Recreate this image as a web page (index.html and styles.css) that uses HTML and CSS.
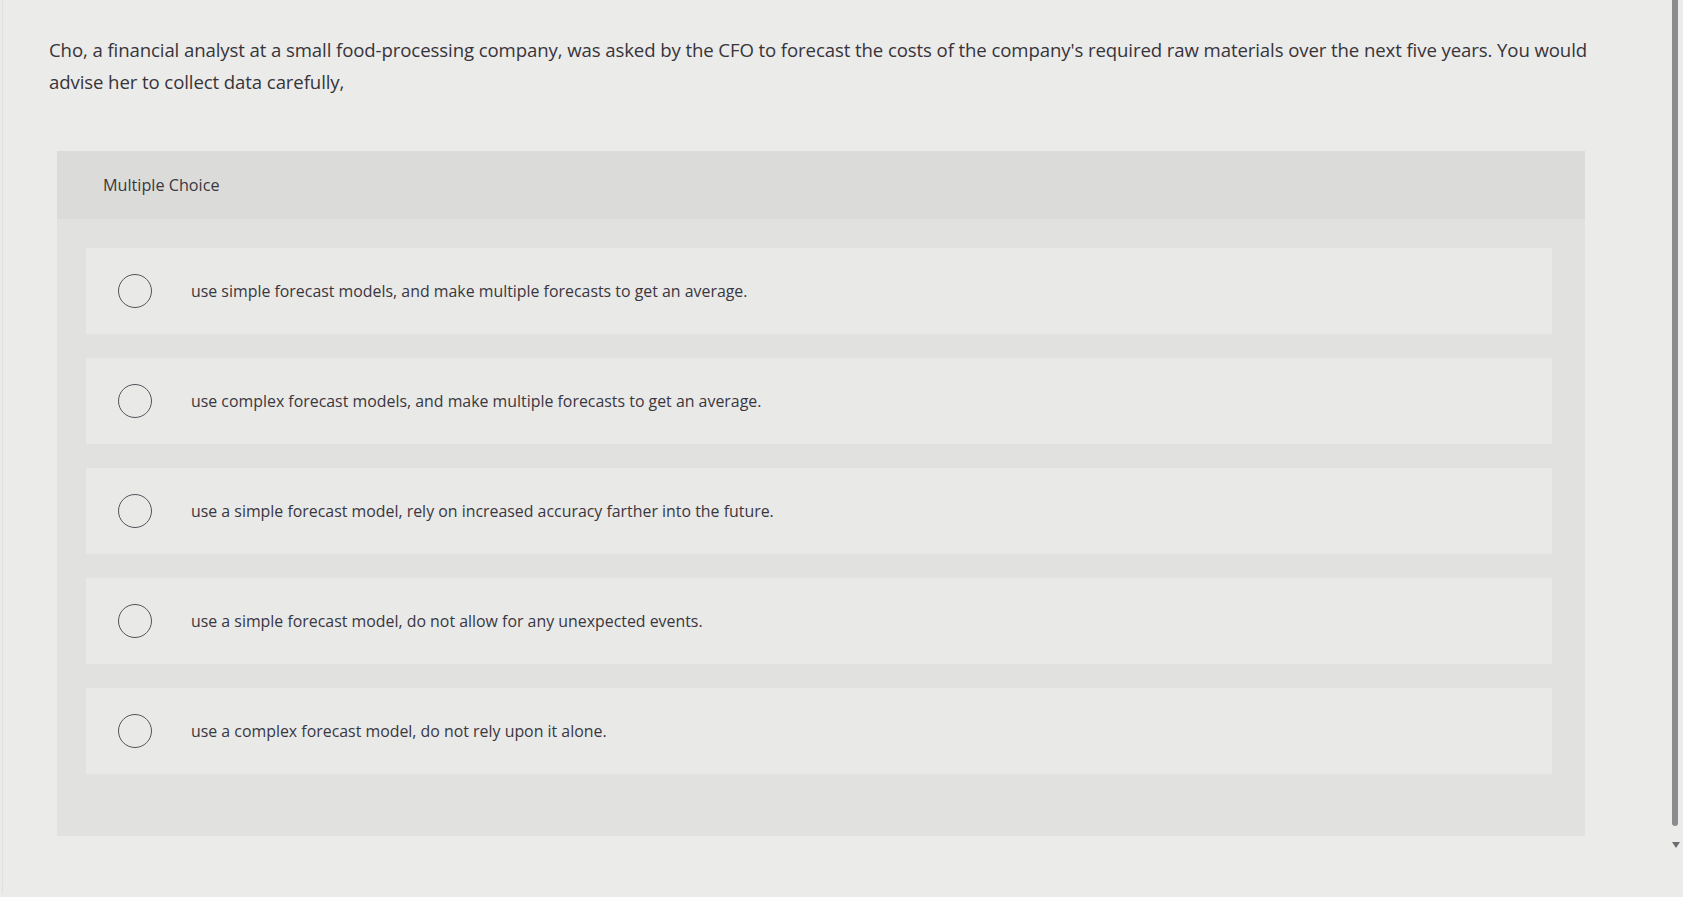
FILE: index.html
```html
<!DOCTYPE html>
<html lang="en">
<head>
<meta charset="utf-8">
<title>Multiple Choice</title>
<link rel="stylesheet" href="styles.css">
</head>
<body>
<div class="page">
  <p class="question">Cho, a financial analyst at a small food-processing company, was asked by the CFO to forecast the costs of the company's required raw materials over the next five years. You would advise her to collect data carefully,</p>
  <section class="panel">
    <div class="panel-head">Multiple Choice</div>
    <div class="options">
      <div class="option"><span class="radio"></span><span class="label">use simple forecast models, and make multiple forecasts to get an average.</span></div>
      <div class="option"><span class="radio"></span><span class="label">use complex forecast models, and make multiple forecasts to get an average.</span></div>
      <div class="option"><span class="radio"></span><span class="label">use a simple forecast model, rely on increased accuracy farther into the future.</span></div>
      <div class="option"><span class="radio"></span><span class="label">use a simple forecast model, do not allow for any unexpected events.</span></div>
      <div class="option"><span class="radio"></span><span class="label">use a complex forecast model, do not rely upon it alone.</span></div>
    </div>
  </section>
</div>
<div class="scrollbar"><div class="thumb"></div><div class="arrow"></div></div>
</body>
</html>
```
FILE: styles.css
```css
html, body {
  margin: 0;
  padding: 0;
}
body {
  background: #ebebea;
  font-family: "Open Sans", Lato, "Liberation Sans", sans-serif;
  color: #37343b;
  height: 897px;
  overflow: hidden;
}
.page {
  padding: 34px 90px 0 46px;
  border-left: 1px solid #e0e0de;
  margin-left: 2px;
  height: 860px;
}
.question {
  margin: 0;
  font-size: 18.6px;
  line-height: 32px;
  width: 1560px;
  letter-spacing: -0.1px;
}
.panel {
  margin: 53px 0 0 8px;
  width: 1528px;
  background: #e1e1e0;
  padding-bottom: 62px;
}
.panel-head {
  height: 68px;
  display: flex;
  align-items: center;
  padding-left: 46px;
  background: #dbdbda;
  font-size: 16.2px;
  color: #3a383e;
}
.options {
  padding: 29px 33px 0 29px;
  display: flex;
  flex-direction: column;
  gap: 24px;
}
.option {
  height: 86px;
  background: #e9e9e8;
  display: flex;
  align-items: center;
  padding-left: 32px;
}
.radio {
  width: 32px;
  height: 32px;
  border: 1.6px solid #55535a;
  border-radius: 50%;
  flex: none;
}
.label {
  margin-left: 39px;
  font-size: 15.9px;
  color: #3a373f;
}
.scrollbar {
  position: fixed;
  top: 0;
  right: 3px;
  width: 8px;
  height: 860px;
}
.thumb {
  width: 6px;
  height: 826px;
  background: #8c8c8e;
  border-radius: 0 0 3px 3px;
}
.arrow {
  margin-top: 16px;
  width: 0;
  height: 0;
  border-left: 4px solid transparent;
  border-right: 4px solid transparent;
  border-top: 6px solid #6c6c70;
}
```
